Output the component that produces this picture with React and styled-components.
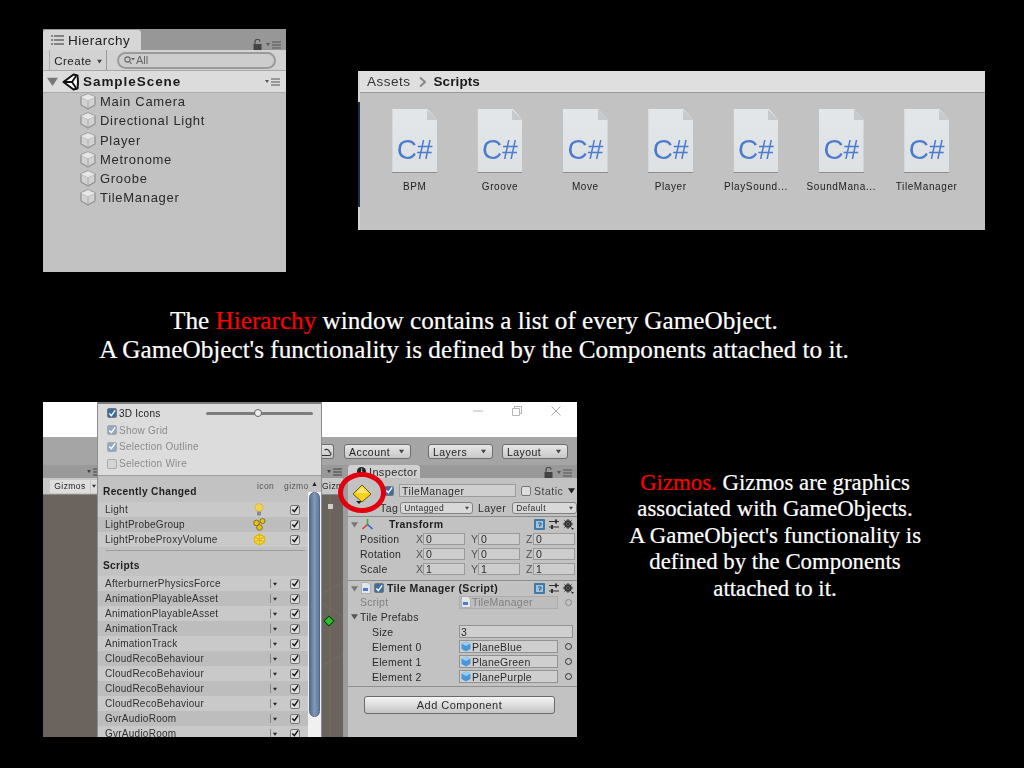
import React from "react"
import styled, { createGlobalStyle } from "styled-components"

const GlobalStyle = createGlobalStyle`
  html, body {
    margin: 0;
    padding: 0;
    background: #000;
  }
`

const UI_FONT = `"Liberation Sans", Arial, sans-serif`
const SLIDE_FONT = `"Liberation Serif", "Times New Roman", serif`

const Slide = styled.div`
  width: 1024px;
  height: 768px;
  background: #000;
  overflow: hidden;
  display: flex;
  flex-direction: column;
  font-family: ${UI_FONT};
`

const TopRow = styled.div`
  display: flex;
  align-items: flex-start;
  padding: 29px 0 0 43px;
  height: 243px;
`

const BottomRow = styled.div`
  display: flex;
  align-items: flex-start;
  padding-left: 43px;
  margin-top: 38px;
`

/* hierarchy window */
const Hierarchy = styled.div`
  width: 243px;
  height: 243px;
  background: #c2c2c2;
  display: flex;
  flex-direction: column;
  filter: blur(0.35px);
`

const HierarchyTabs = styled.div`
  height: 21px;
  background: #979797;
  display: flex;
  align-items: flex-end;
  justify-content: space-between;
  padding-right: 5px;
`

const HierarchyTab = styled.div`
  width: 98px;
  height: 20px;
  background: #d6d6d6;
  border-radius: 3px 3px 0 0;
  display: flex;
  align-items: center;
  gap: 4px;
  padding-left: 8px;
  box-sizing: border-box;
  font-size: 13.5px;
  letter-spacing: 0.5px;
  color: #222;
`

const HierarchyToolbar = styled.div`
  height: 20px;
  background: #d2d2d2;
  border-bottom: 1px solid #a8a8a8;
  display: flex;
  align-items: center;
  padding-left: 6px;
`

const CreateButton = styled.div`
  width: 58px;
  height: 20px;
  padding-top: 2px;
  border-left: 1px solid #aaa;
  border-right: 1px solid #999;
  display: flex;
  align-items: center;
  justify-content: center;
  gap: 5px;
  font-size: 11.5px;
  letter-spacing: 0.5px;
  color: #222;
  box-sizing: border-box;
`

const SearchBox = styled.div`
  width: 159px;
  height: 17px;
  margin-left: 10px;
  border: 2px solid #9a9a9a;
  border-radius: 9px;
  background: #cdcdcd;
  box-sizing: border-box;
  display: flex;
  align-items: center;
  gap: 1px;
  padding-left: 5px;
  font-size: 11px;
  color: #666;
`

const SceneRow = styled.div`
  height: 21px;
  background: #dcdcdc;
  border-bottom: 1px solid #aaa;
  display: flex;
  align-items: center;
  padding: 0 6px 0 4px;
  gap: 4px;
  font-size: 13.5px;
  font-weight: bold;
  letter-spacing: 0.95px;
  color: #1c1c1c;
`

const SceneName = styled.span`
  flex: 1;
`

const TreeList = styled.div`
  display: flex;
  flex-direction: column;
  margin-top: -1px;
`

const TreeItem = styled.div`
  height: 19.25px;
  display: flex;
  align-items: center;
  gap: 4px;
  padding-left: 37px;
  font-size: 13px;
  letter-spacing: 0.7px;
  color: #2a2a2a;
`

/* project window */
const Project = styled.div`
  position: relative;
  width: 627px;
  height: 159px;
  margin: 42px 0 0 72px;
  background: #c2c2c2;
  border-left: 2px solid #d6d6d6;
  box-sizing: border-box;
  display: flex;
  flex-direction: column;
  filter: blur(0.35px);
`

const EdgeStrip = styled.div`
  position: absolute;
  left: -2px;
  top: 31px;
  width: 2px;
  height: 105px;
  background: #1c2c44;
`

const Breadcrumb = styled.div`
  height: 21px;
  background: #dfdfdf;
  border-bottom: 1px solid #9a9a9a;
  display: flex;
  align-items: center;
  padding-left: 7px;
  gap: 8px;
  font-size: 13.5px;
  letter-spacing: 0.5px;
  color: #333;
`

const Crumb = styled.span`
  font-weight: ${p => (p.$current ? "bold" : "normal")};
  letter-spacing: ${p => (p.$current ? "0.1px" : "0.5px")};
  color: ${p => (p.$current ? "#1c1c1c" : "#333")};
`

const AssetGrid = styled.div`
  display: flex;
  padding: 16px 0 0 12px;
`

const Asset = styled.div`
  width: 85.33px;
  display: flex;
  flex-direction: column;
  align-items: center;
`

const FileShadow = styled.div`
  filter: drop-shadow(0 1px 0.5px #8c8c8c);
`

const FileIcon = styled.div`
  position: relative;
  width: 45px;
  height: 63px;
  background: linear-gradient(#e4e7ea, #dde1e4);
  clip-path: polygon(0 0, 35px 0, 45px 11px, 45px 63px, 0 63px);
  display: flex;
  align-items: flex-end;
  justify-content: center;
  padding-bottom: 7px;
  box-sizing: border-box;
  font-size: 28px;
  line-height: 30px;
  color: #4b7ccd;

  &::before {
    content: "";
    position: absolute;
    top: 0;
    right: 0;
    width: 10px;
    height: 11px;
    background: linear-gradient(45deg, #c6cacd 50%, #f2f3f4 50%);
  }
`

const AssetName = styled.div`
  margin-top: 9px;
  font-size: 10px;
  letter-spacing: 0.6px;
  color: #222;
  white-space: nowrap;
`

/* slide captions */
const Caption = styled.div`
  width: 948px;
  margin-top: 34px;
  text-align: center;
  font-family: ${SLIDE_FONT};
  font-size: 25.2px;
  line-height: 29px;
  color: #fff;
  -webkit-text-stroke: 0.2px #fff;
`

const SideCaption = styled.div`
  width: 320px;
  margin: 68px 0 0 38px;
  text-align: center;
  font-family: ${SLIDE_FONT};
  font-size: 22.8px;
  line-height: 26.4px;
  color: #fff;
  -webkit-text-stroke: 0.2px #fff;
`

const Red = styled.span`
  color: #f00;
  -webkit-text-stroke-color: #f00;
`

/* editor screenshot */
const Editor = styled.div`
  position: relative;
  width: 534px;
  height: 335px;
  flex: none;
  overflow: hidden;
  background: #a2a2a2;
  display: flex;
  flex-direction: column;
  filter: blur(0.3px);
`

const TitleBar = styled.div`
  height: 35px;
  background: #fff;
  display: flex;
  justify-content: flex-end;
  align-items: center;
  gap: 29px;
  padding: 0 16px 17px 0;
  flex: none;
  box-sizing: border-box;
`

const Toolbar = styled.div`
  height: 28px;
  flex: none;
  display: flex;
  align-items: flex-start;
  padding: 7px 0 0 279px;
  background: #a5a5a5;
  box-sizing: border-box;
`

const ToolButton = styled.div`
  width: ${p => p.$w}px;
  height: 15px;
  margin-left: ${p => p.$ml}px;
  padding: 0 6px 0 4px;
  box-sizing: border-box;
  border: 1px solid #6f6f6f;
  border-radius: 3px;
  background: linear-gradient(#e6e6e6, #c8c8c8);
  display: flex;
  align-items: center;
  justify-content: space-between;
  font-size: 10.5px;
  letter-spacing: 0.45px;
  color: #222;
`

const CloudStub = styled(ToolButton)`
  padding: 0;
  justify-content: flex-end;
  border-left: none;
  border-radius: 0 3px 3px 0;
`

const Workspace = styled.div`
  flex: 1;
  display: flex;
  min-height: 0;
`

const SceneColumn = styled.div`
  width: 300px;
  flex: none;
  display: flex;
  flex-direction: column;
`

const SceneTabs = styled.div`
  height: 13px;
  background: #999;
  display: flex;
  align-items: center;
  padding-left: 44px;
  gap: 225px;
`

const SceneToolbar = styled.div`
  height: 16px;
  background: #c8c8c8;
  border-bottom: 1px solid #8a8a8a;
  display: flex;
  align-items: center;
  padding-left: 7px;
  font-size: 8.5px;
  letter-spacing: 0.45px;
  color: #222;
`

const SceneGizmos = styled.span`
  width: 40px;
  height: 13px;
  background: #dedede;
  display: flex;
  align-items: center;
  justify-content: center;
`

const GizmosArrow = styled.span`
  width: 6px;
  height: 13px;
  margin-left: 1px;
  background: #dedede;
  display: flex;
  align-items: center;
  justify-content: center;
`

const SceneGizmosRight = styled.span`
  margin-left: 225px;
  width: 21px;
  overflow: hidden;
`

const Viewport = styled.div`
  position: relative;
  flex: 1;
  background: #6b635d;
`

const GridLines = styled.svg`
  position: absolute;
  left: 279px;
  top: 0;
  width: 21px;
  height: 242px;
`

const GreenMark = styled.div`
  position: absolute;
  left: 282px;
  top: 122px;
  width: 6px;
  height: 6px;
  background: #2fc02f;
  border: 1px solid #0d3d0d;
  transform: rotate(45deg);
`

const LockMark = styled.div`
  position: absolute;
  left: 285px;
  top: 9px;
  width: 5px;
  height: 5px;
  background: #cfcfcf;
`

const Splitter = styled.div`
  width: 5px;
  flex: none;
  background: #9c9c9c;
`

const Inspector = styled.div`
  width: 229px;
  flex: none;
  background: #c2c2c2;
  display: flex;
  flex-direction: column;
  font-size: 10.5px;
  letter-spacing: 0.25px;
  color: #2b2b2b;
`

const InspectorTabs = styled.div`
  height: 13px;
  background: #999;
  display: flex;
  align-items: flex-end;
  justify-content: space-between;
  padding-right: 5px;
`

const InspectorTab = styled.div`
  width: 72px;
  height: 13px;
  background: #d0d0d0;
  border-radius: 3px 3px 0 0;
  display: flex;
  align-items: center;
  gap: 3px;
  padding-left: 9px;
  box-sizing: border-box;
  font-size: 11px;
  letter-spacing: 0.35px;
  white-space: nowrap;
`

const ObjectHeader = styled.div`
  height: 39px;
  border-bottom: 1px solid #8c8c8c;
  box-sizing: border-box;
  display: flex;
  flex-direction: column;
  gap: 4px;
  padding: 6px 0 0 36px;
`

const HeaderLine = styled.div`
  display: flex;
  align-items: center;
  height: 13px;
`

const NameField = styled.div`
  width: 117px;
  height: 13px;
  margin-left: 5px;
  background: #cfcfcf;
  border: 1px solid #9c9c9c;
  box-sizing: border-box;
  display: flex;
  align-items: center;
  padding-left: 2px;
  font-size: 10.5px;
  letter-spacing: 0.4px;
`

const StaticToggle = styled.span`
  margin-left: 5px;
  display: inline-flex;
`

const StaticLabel = styled.span`
  margin-left: 3px;
  font-size: 10.5px;
  letter-spacing: 0.5px;
  color: #444;
`

const StaticArrow = styled.span`
  margin-left: 5px;
  display: inline-flex;
`

const SelectBox = styled.div`
  width: ${p => p.$w}px;
  height: 12px;
  margin-left: ${p => p.$ml}px;
  border: 1px solid #808080;
  border-radius: 3px;
  background: #d8d8d8;
  box-sizing: border-box;
  padding: 0 3px;
  display: flex;
  align-items: center;
  justify-content: space-between;
  font-size: 8.5px;
  letter-spacing: 0.4px;
`

const HeaderLabel = styled.span`
  font-size: 10.5px;
  letter-spacing: 0.4px;
  margin-left: ${p => p.$ml || 0}px;
`

const SectionHead = styled.div`
  height: ${p => p.$h}px;
  flex: none;
  display: flex;
  align-items: center;
  padding: 0 3px;
  gap: 3px;
  font-weight: bold;
  font-size: 10.5px;
  letter-spacing: 0.35px;
  color: #1f1f1f;
`

const SectionTitle = styled.span`
  flex: 1;
  margin-left: ${p => p.$ml || 0}px;
`

const SectionTools = styled.span`
  display: flex;
  align-items: center;
  gap: 4px;
`

const VectorRow = styled.div`
  height: 15px;
  display: flex;
  align-items: center;
  padding-left: 12px;
`

const VectorLabel = styled.span`
  width: 56px;
`

const VectorAxis = styled.span`
  width: 7px;
  margin-left: ${p => (p.$first ? 0 : 6)}px;
  color: #555;
`

const VectorInput = styled.span`
  width: 42px;
  height: 12px;
  background: #cdcdcd;
  border: 1px solid #9a9a9a;
  box-sizing: border-box;
  padding-left: 2px;
  display: flex;
  align-items: center;
`

const Divider = styled.div`
  height: 1px;
  flex: none;
  margin-top: ${p => p.$mt || 0}px;
  background: #8f8f8f;
`

const PropRow = styled.div`
  height: ${p => p.$h || 15}px;
  flex: none;
  display: flex;
  align-items: center;
  padding-left: ${p => p.$indent}px;
  color: ${p => (p.$muted ? "#7f7f7f" : "#2b2b2b")};
  gap: ${p => p.$gap || 0}px;
`

const PropLabel = styled.span`
  width: ${p => p.$w}px;
  flex: none;
`

const PropField = styled.span`
  width: ${p => p.$w}px;
  height: 13px;
  flex: none;
  background: ${p => (p.$muted ? "#bdbdbd" : "#cfcfcf")};
  border: 1px solid ${p => (p.$muted ? "#adadad" : "#929292")};
  box-sizing: border-box;
  display: flex;
  align-items: center;
  gap: 1px;
  padding-left: 1px;
`

const TargetDot = styled.span`
  width: 5px;
  height: 5px;
  margin-left: 7px;
  border: 1px solid ${p => (p.$muted ? "#8a8a8a" : "#333")};
  border-radius: 50%;
`

const AddRow = styled.div`
  display: flex;
  padding: 9px 0 0 16px;
`

const AddButton = styled.div`
  width: 191px;
  height: 18px;
  border: 1px solid #6a6a6a;
  border-radius: 3px;
  box-sizing: border-box;
  background: linear-gradient(#f4f4f4, #c4c4c4);
  display: flex;
  align-items: center;
  justify-content: center;
  font-size: 11px;
  letter-spacing: 0.45px;
`

/* gizmos dropdown */
const Popup = styled.div`
  position: absolute;
  left: 54px;
  top: 0;
  width: 225px;
  height: 335px;
  background: #c2c2c2;
  border-left: 1px solid #8c8c8c;
  border-right: 1px solid #8c8c8c;
  box-sizing: border-box;
  display: flex;
  flex-direction: column;
  font-size: 10px;
  letter-spacing: 0.25px;
  color: #303030;
`

const PopupTop = styled.div`
  height: 74px;
  flex: none;
  background: #dcdcdc;
  border-top: 2px solid #7c7c7c;
  border-bottom: 1px solid #9c9c9c;
  box-sizing: border-box;
  padding: 1px 0 0 9px;
`

const OptionRow = styled.div`
  height: 16.8px;
  display: flex;
  align-items: center;
  gap: 2px;
  color: ${p => (p.$disabled ? "#8c8c8c" : "#222")};
`

const SliderTrack = styled.div`
  position: relative;
  width: 107px;
  height: 3px;
  margin-left: 44px;
  border-radius: 2px;
  background: #7d7d7d;
`

const SliderKnob = styled.div`
  position: absolute;
  left: 48px;
  top: -3px;
  width: 8px;
  height: 8px;
  border-radius: 50%;
  background: #eee;
  border: 1px solid #666;
  box-sizing: border-box;
`

const PopupBody = styled.div`
  position: relative;
  flex: 1;
  min-height: 0;
  padding-right: 13px;
`

const ColumnHeads = styled.div`
  height: 8px;
  position: relative;
`

const ColumnLabel = styled.span`
  position: absolute;
  top: 5px;
  left: ${p => p.$x}px;
  font-size: 8.5px;
  letter-spacing: 0.4px;
  color: #555;
`

const GroupTitle = styled.div`
  height: ${p => p.$h}px;
  margin-top: ${p => p.$mt || 0}px;
  margin-bottom: ${p => p.$mb || 0}px;
  display: flex;
  align-items: center;
  padding-left: 5px;
  font-size: 10.2px;
  font-weight: bold;
  letter-spacing: 0.3px;
  color: #1f1f1f;
`

const GizmoRow = styled.div`
  height: 15px;
  display: flex;
  align-items: center;
  padding-left: 7px;
  background: ${p => (p.$odd ? "#bdbdbd" : "#c9c9c9")};
`

const GizmoName = styled.span`
  flex: 1;
`

const IconCell = styled.span`
  width: 41px;
  padding-right: 21px;
  box-sizing: border-box;
  display: flex;
  justify-content: center;
`

const ArrowCell = styled.span`
  width: 20px;
  display: flex;
  align-items: center;
  padding-left: 2px;
  box-sizing: border-box;
  height: 9px;
  border-left: 1px solid #888;
`

const CheckCell = styled.span`
  width: 18px;
  display: flex;
`

const GroupRule = styled.div`
  height: 1px;
  margin: 3px 3px 0 8px;
  background: #9c9c9c;
`

const ScrollTrack = styled.div`
  position: absolute;
  top: 0;
  right: 0;
  bottom: 0;
  width: 13px;
  background: #f0f0f0;
  display: flex;
  flex-direction: column;
  align-items: center;
`

const ScrollArrow = styled.div`
  height: 16px;
  flex: none;
  width: 100%;
  background: #c2c2c2;
  color: #222;
  font-size: 7px;
  line-height: 16px;
  text-align: center;
`

const ScrollThumb = styled.div`
  width: 11px;
  height: 225px;
  border-radius: 6px;
  border: 1px solid #54678a;
  box-sizing: border-box;
  background: linear-gradient(90deg, #57708f, #8199ba 50%, #5f7a9e);
`

const Box = styled.span`
  width: ${p => p.$size}px;
  height: ${p => p.$size}px;
  flex: none;
  box-sizing: border-box;
  border: 1px solid ${p => (p.$faded ? "#a9a9a9" : "#777")};
  border-radius: 2px;
  background: ${p => (p.$blue ? (p.$faded ? "#8fa8c6" : "#3b6ea6") : p.$faded ? "#d4d4d4" : "#dcdcdc")};
  display: inline-flex;
  align-items: center;
  justify-content: center;
`

const HighlightRing = styled.div`
  position: absolute;
  left: 295px;
  top: 70px;
  width: 48px;
  height: 41px;
  border: 5px solid #e2000f;
  border-radius: 50%;
  box-sizing: border-box;
`

const DiamondSlot = styled.div`
  position: absolute;
  left: 309px;
  top: 82px;
`

/* drawings */
const Tick = ({ color = "#fff" }) => (
  <svg width="9" height="9" viewBox="0 0 9 9">
    <path d="M1.5 4.5 L3.8 7 L8 1" fill="none" stroke={color} strokeWidth="1.6" />
  </svg>
)

const Check = ({ size = 10, blue, faded, on = true, tick }) => (
  <Box $size={size} $blue={blue} $faded={faded}>
    {on && <Tick color={tick} />}
  </Box>
)

const Cube = () => (
  <svg width="16" height="17" viewBox="0 0 16 17">
    <path d="M8 1 L15 4 V12 L8 16 L1 12 V4 Z" fill="#d2d2d2" stroke="#8f8f8f" strokeWidth="1.2" />
    <path d="M1 4 L8 7.5 L15 4 M8 7.5 V16" fill="none" stroke="#a8a8a8" strokeWidth="1" />
    <path d="M8 1 L15 4 L8 7.5 L1 4 Z" fill="#e6e6e6" />
  </svg>
)

const UnityLogo = () => (
  <svg width="17" height="18" viewBox="0 0 17 18">
    <path d="M1.5 9 L11.5 1.5 L15.5 2.5 L16 9 L15.5 15.5 L11.5 16.5 Z" fill="#fff" stroke="#111" strokeWidth="2" strokeLinejoin="round" />
    <path d="M2 9 H10 L14 3 M10 9 L14 15" fill="none" stroke="#111" strokeWidth="1.8" />
  </svg>
)

const DownTriangle = ({ size = 5, color = "#444" }) => (
  <svg width={size} height={size} viewBox="0 0 6 6">
    <path d="M0 1 H6 L3 5.5 Z" fill={color} />
  </svg>
)

const PaneMenu = ({ color = "#555" }) => (
  <svg width="15" height="8" viewBox="0 0 15 8">
    <path d="M0 2 H4 L2 5 Z" fill={color} />
    <path d="M6 1 H15 M6 4 H15 M6 7 H15" stroke={color} strokeWidth="1.2" />
  </svg>
)

const Lock = () => (
  <svg width="9" height="11" viewBox="0 0 9 11">
    <path d="M2 5 V3 A2.4 2.4 0 0 1 7 2.6" fill="none" stroke="#444" strokeWidth="1.1" />
    <rect x="0.5" y="5" width="8" height="6" fill="#444" />
  </svg>
)

const ListGlyph = () => (
  <svg width="13" height="10" viewBox="0 0 13 10">
    <path d="M3 1 H13 M3 5 H13 M3 9 H13" stroke="#333" strokeWidth="1.1" />
    <path d="M0 1 H2 M0 5 H2 M0 9 H2" stroke="#333" strokeWidth="1.1" />
  </svg>
)

const Magnifier = () => (
  <svg width="11" height="9" viewBox="0 0 11 9">
    <circle cx="3.5" cy="3.5" r="2.6" fill="none" stroke="#666" strokeWidth="1.1" />
    <path d="M5.5 5.5 L7.5 8" stroke="#666" strokeWidth="1.2" />
    <path d="M7 2 H11 L9 4.5 Z" fill="#666" />
  </svg>
)

const CloudArc = () => (
  <svg width="11" height="13" viewBox="0 0 11 13">
    <path d="M0 10.5 H7 C9.5 10.5 9.5 7.5 7.5 7 C7 4.5 4.5 3.5 2.5 5" fill="none" stroke="#333" strokeWidth="1.2" />
  </svg>
)

const Bulb = () => (
  <svg width="10" height="13" viewBox="0 0 10 13">
    <circle cx="5" cy="4.5" r="4" fill="#f3d24c" stroke="#c9a93a" strokeWidth="0.6" />
    <rect x="3" y="8.5" width="4" height="4" fill="#8b8b8b" />
  </svg>
)

const BulbGroup = () => (
  <svg width="13" height="13" viewBox="0 0 13 13">
    <circle cx="3.5" cy="5" r="2.8" fill="#e8c318" stroke="#5e5200" strokeWidth="0.7" />
    <circle cx="9.5" cy="3" r="2.5" fill="#e8c318" stroke="#5e5200" strokeWidth="0.7" />
    <circle cx="6.5" cy="9.5" r="2.8" fill="#e8c318" stroke="#5e5200" strokeWidth="0.7" />
  </svg>
)

const VolumeGlyph = () => (
  <svg width="13" height="13" viewBox="0 0 13 13">
    <path d="M6.5 1 L11.5 3.8 V9.2 L6.5 12 L1.5 9.2 V3.8 Z M6.5 1 V12 M1.5 3.8 L11.5 9.2 M11.5 3.8 L1.5 9.2" fill="#f0d95a" stroke="#e0b90e" strokeWidth="1.3" />
  </svg>
)

const YellowDiamond = () => (
  <svg width="20" height="22" viewBox="0 0 20 22">
    <path d="M4 17 H10 L7 20 Z" fill="#222" />
    <path d="M10 1 L19 10 L10 18 L1 10 Z" fill="#f6d21e" stroke="#6b5a10" strokeWidth="1" />
    <path d="M10 3 L16 9 H4 Z" fill="#fbe678" />
  </svg>
)

const TransformGlyph = () => (
  <svg width="13" height="13" viewBox="0 0 13 13">
    <path d="M6.5 6.5 V1" stroke="#3bb03b" strokeWidth="1.6" />
    <path d="M6.5 6.5 L1.5 11" stroke="#d8382c" strokeWidth="1.6" />
    <path d="M6.5 6.5 L11.5 11" stroke="#2c63d8" strokeWidth="1.6" />
  </svg>
)

const ScriptGlyph = () => (
  <svg width="10" height="12" viewBox="0 0 10 12">
    <path d="M0.5 0.5 H7 L9.5 3 V11.5 H0.5 Z" fill="#e3e6e8" stroke="#999" strokeWidth="0.6" />
    <rect x="2" y="6" width="5" height="3" fill="#4b7ccd" />
  </svg>
)

const InfoDot = () => (
  <svg width="9" height="9" viewBox="0 0 9 9">
    <circle cx="4.5" cy="4.5" r="4.5" fill="#222" />
    <rect x="4" y="3.5" width="1.2" height="3.5" fill="#ddd" />
    <rect x="4" y="1.5" width="1.2" height="1.2" fill="#ddd" />
  </svg>
)

const HelpBook = () => (
  <svg width="11" height="11" viewBox="0 0 11 11">
    <rect width="11" height="11" rx="1" fill="#3e7ba8" />
    <rect x="2" y="2" width="7" height="7" fill="#9fc4dc" />
    <path d="M4 4 H7 V6 H5.5 V7.5" fill="none" stroke="#2a5a80" strokeWidth="1" />
  </svg>
)

const SlidersGlyph = () => (
  <svg width="10" height="11" viewBox="0 0 10 11">
    <path d="M0 2.5 H10 M0 8 H10" stroke="#333" strokeWidth="1.2" />
    <rect x="6" y="0.5" width="2" height="4" fill="#333" />
    <rect x="2" y="6" width="2" height="4" fill="#333" />
  </svg>
)

const Gear = () => (
  <svg width="11" height="11" viewBox="0 0 11 11">
    <circle cx="5" cy="5" r="2.8" fill="none" stroke="#333" strokeWidth="2" />
    <path d="M5 0 V10 M0 5 H10 M1.5 1.5 L8.5 8.5 M8.5 1.5 L1.5 8.5" stroke="#333" strokeWidth="1" />
    <path d="M8 9 H11 L9.5 11 Z" fill="#333" />
  </svg>
)

const PrefabCube = () => (
  <svg width="10" height="11" viewBox="0 0 10 11">
    <path d="M5 0.5 L9.5 2.5 V8 L5 10.5 L0.5 8 V2.5 Z" fill="#4a97dc" />
    <path d="M5 0.5 L9.5 2.5 L5 5 L0.5 2.5 Z" fill="#9ccdf0" />
  </svg>
)

const WinMin = () => (
  <svg width="10" height="10" viewBox="0 0 10 10">
    <path d="M0 5 H10" stroke="#b5b5b5" strokeWidth="1" />
  </svg>
)

const WinMax = () => (
  <svg width="10" height="10" viewBox="0 0 10 10">
    <path d="M0.5 2.5 H7.5 V9.5 H0.5 Z M2.5 2.5 V0.5 H9.5 V7.5 H7.5" fill="none" stroke="#b5b5b5" strokeWidth="1" />
  </svg>
)

const WinClose = () => (
  <svg width="10" height="10" viewBox="0 0 10 10">
    <path d="M0.5 0.5 L9.5 9.5 M9.5 0.5 L0.5 9.5" stroke="#aaa" strokeWidth="1" />
  </svg>
)

const TREE_ITEMS = ["Main Camera", "Directional Light", "Player", "Metronome", "Groobe", "TileManager"]
const ASSETS = ["BPM", "Groove", "Move", "Player", "PlaySound...", "SoundMana...", "TileManager"]
const RECENT = [
  { name: "Light", icon: <Bulb /> },
  { name: "LightProbeGroup", icon: <BulbGroup /> },
  { name: "LightProbeProxyVolume", icon: <VolumeGlyph /> },
]
const SCRIPTS = [
  "AfterburnerPhysicsForce",
  "AnimationPlayableAsset",
  "AnimationPlayableAsset",
  "AnimationTrack",
  "AnimationTrack",
  "CloudRecoBehaviour",
  "CloudRecoBehaviour",
  "CloudRecoBehaviour",
  "CloudRecoBehaviour",
  "GvrAudioRoom",
  "GvrAudioRoom",
]
const VECTORS = [
  { label: "Position", values: [0, 0, 0] },
  { label: "Rotation", values: [0, 0, 0] },
  { label: "Scale", values: [1, 1, 1] },
]
const ELEMENTS = ["PlaneBlue", "PlaneGreen", "PlanePurple"]

const App = () => (
  <Slide>
    <GlobalStyle />
    <TopRow>
      <Hierarchy>
        <HierarchyTabs>
          <HierarchyTab>
            <ListGlyph />
            Hierarchy
          </HierarchyTab>
          <SectionTools>
            <Lock />
            <PaneMenu />
          </SectionTools>
        </HierarchyTabs>
        <HierarchyToolbar>
          <CreateButton>
            Create
            <DownTriangle />
          </CreateButton>
          <SearchBox>
            <Magnifier />
            All
          </SearchBox>
        </HierarchyToolbar>
        <SceneRow>
          <DownTriangle size={11} color="#777" />
          <UnityLogo />
          <SceneName>SampleScene</SceneName>
          <PaneMenu />
        </SceneRow>
        <TreeList>
          {TREE_ITEMS.map(item => (
            <TreeItem key={item}>
              <Cube />
              {item}
            </TreeItem>
          ))}
        </TreeList>
      </Hierarchy>
      <Project>
        <EdgeStrip />
        <Breadcrumb>
          <Crumb>Assets</Crumb>
          <svg width="7" height="10" viewBox="0 0 7 10">
            <path d="M1 0.5 L6 5 L1 9.5" fill="none" stroke="#888" strokeWidth="2" />
          </svg>
          <Crumb $current>Scripts</Crumb>
        </Breadcrumb>
        <AssetGrid>
          {ASSETS.map(name => (
            <Asset key={name}>
              <FileShadow>
                <FileIcon>C#</FileIcon>
              </FileShadow>
              <AssetName>{name}</AssetName>
            </Asset>
          ))}
        </AssetGrid>
      </Project>
    </TopRow>

    <Caption>
      The <Red>Hierarchy</Red> window contains a list of every GameObject.
      <br />
      A GameObject's functionality is defined by the Components attached to it.
    </Caption>

    <BottomRow>
      <Editor>
        <TitleBar>
          <WinMin />
          <WinMax />
          <WinClose />
        </TitleBar>
        <Toolbar>
          <CloudStub $w={12} $ml={0}>
            <CloudArc />
          </CloudStub>
          <ToolButton $w={67} $ml={10}>
            Account
            <DownTriangle />
          </ToolButton>
          <ToolButton $w={65} $ml={17}>
            Layers
            <DownTriangle />
          </ToolButton>
          <ToolButton $w={66} $ml={9}>
            Layout
            <DownTriangle />
          </ToolButton>
        </Toolbar>
        <Workspace>
          <SceneColumn>
            <SceneTabs>
              <PaneMenu color="#444" />
              <PaneMenu color="#444" />
            </SceneTabs>
            <SceneToolbar>
              <SceneGizmos>Gizmos</SceneGizmos>
              <GizmosArrow>
                <DownTriangle size={4} color="#333" />
              </GizmosArrow>
              <SceneGizmosRight>Gizmos</SceneGizmosRight>
            </SceneToolbar>
            <Viewport>
              <GridLines viewBox="0 0 21 242">
                <path d="M0 98 L21 88 M0 108 L21 122 M8 0 V242 M0 170 L21 160" stroke="#7b736c" strokeWidth="0.7" fill="none" />
              </GridLines>
              <LockMark />
              <GreenMark />
            </Viewport>
          </SceneColumn>
          <Splitter />
          <Inspector>
            <InspectorTabs>
              <InspectorTab>
                <InfoDot />
                Inspector
              </InspectorTab>
              <SectionTools>
                <Lock />
                <PaneMenu />
              </SectionTools>
            </InspectorTabs>
            <ObjectHeader>
              <HeaderLine>
                <Check size={10} blue />
                <NameField>TileManager</NameField>
                <StaticToggle>
                  <Check size={10} on={false} />
                </StaticToggle>
                <StaticLabel>Static</StaticLabel>
                <StaticArrow>
                  <DownTriangle size={7} color="#222" />
                </StaticArrow>
              </HeaderLine>
              <HeaderLine>
                <HeaderLabel $ml={-4}>Tag</HeaderLabel>
                <SelectBox $w={73} $ml={2}>
                  Untagged
                  <DownTriangle size={4} />
                </SelectBox>
                <HeaderLabel $ml={5}>Layer</HeaderLabel>
                <SelectBox $w={65} $ml={6}>
                  Default
                  <DownTriangle size={4} />
                </SelectBox>
              </HeaderLine>
            </ObjectHeader>
            <SectionHead $h={14}>
              <DownTriangle size={7} color="#777" />
              <TransformGlyph />
              <SectionTitle $ml={12}>Transform</SectionTitle>
              <SectionTools>
                <HelpBook />
                <SlidersGlyph />
                <Gear />
              </SectionTools>
            </SectionHead>
            {VECTORS.map(row => (
              <VectorRow key={row.label}>
                <VectorLabel>{row.label}</VectorLabel>
                {["X", "Y", "Z"].map((axis, i) => (
                  <React.Fragment key={axis}>
                    <VectorAxis $first={i === 0}>{axis}</VectorAxis>
                    <VectorInput>{row.values[i]}</VectorInput>
                  </React.Fragment>
                ))}
              </VectorRow>
            ))}
            <Divider $mt={4} />
            <SectionHead $h={14}>
              <DownTriangle size={7} color="#777" />
              <ScriptGlyph />
              <Check size={10} blue />
              <SectionTitle>Tile Manager (Script)</SectionTitle>
              <SectionTools>
                <HelpBook />
                <SlidersGlyph />
                <Gear />
              </SectionTools>
            </SectionHead>
            <PropRow $h={14} $indent={12} $muted>
              <PropLabel $w={99}>Script</PropLabel>
              <PropField $w={99} $muted>
                <ScriptGlyph />
                TileManager
              </PropField>
              <TargetDot $muted />
            </PropRow>
            <PropRow $indent={3} $gap={2}>
              <DownTriangle size={7} color="#555" />
              Tile Prefabs
            </PropRow>
            <PropRow $indent={24}>
              <PropLabel $w={87}>Size</PropLabel>
              <PropField $w={114}>3</PropField>
            </PropRow>
            {ELEMENTS.map((el, i) => (
              <PropRow key={el} $indent={24}>
                <PropLabel $w={87}>Element {i}</PropLabel>
                <PropField $w={99}>
                  <PrefabCube />
                  {el}
                </PropField>
                <TargetDot />
              </PropRow>
            ))}
            <Divider $mt={2} />
            <AddRow>
              <AddButton>Add Component</AddButton>
            </AddRow>
          </Inspector>
        </Workspace>

        <Popup>
          <PopupTop>
            <OptionRow>
              <Check size={10} blue />
              3D Icons
              <SliderTrack>
                <SliderKnob />
              </SliderTrack>
            </OptionRow>
            <OptionRow $disabled>
              <Check size={10} blue faded />
              Show Grid
            </OptionRow>
            <OptionRow $disabled>
              <Check size={10} blue faded />
              Selection Outline
            </OptionRow>
            <OptionRow $disabled>
              <Check size={10} faded on={false} />
              Selection Wire
            </OptionRow>
          </PopupTop>
          <PopupBody>
            <ColumnHeads>
              <ColumnLabel $x={159}>icon</ColumnLabel>
              <ColumnLabel $x={186}>gizmo</ColumnLabel>
            </ColumnHeads>
            <GroupTitle $h={14} $mb={4}>
              Recently Changed
            </GroupTitle>
            {RECENT.map((row, i) => (
              <GizmoRow key={row.name} $odd={i % 2 === 1}>
                <GizmoName>{row.name}</GizmoName>
                <IconCell>{row.icon}</IconCell>
                <CheckCell>
                  <Check size={10} tick="#111" />
                </CheckCell>
              </GizmoRow>
            ))}
            <GroupRule />
            <GroupTitle $h={22} $mt={3}>
              Scripts
            </GroupTitle>
            {SCRIPTS.map((name, i) => (
              <GizmoRow key={name + i} $odd={i % 2 === 1}>
                <GizmoName>{name}</GizmoName>
                <ArrowCell>
                  <DownTriangle size={4} color="#222" />
                </ArrowCell>
                <CheckCell>
                  <Check size={10} tick="#111" />
                </CheckCell>
              </GizmoRow>
            ))}
            <ScrollTrack>
              <ScrollArrow>▲</ScrollArrow>
              <ScrollThumb />
            </ScrollTrack>
          </PopupBody>
        </Popup>

        <DiamondSlot>
          <YellowDiamond />
        </DiamondSlot>
        <HighlightRing />
      </Editor>

      <SideCaption>
        <Red>Gizmos.</Red> Gizmos are graphics associated with GameObjects.
        <br />
        A GameObject's functionality is defined by the Components
        <br />
        attached to it.
      </SideCaption>
    </BottomRow>
  </Slide>
)

export default App
